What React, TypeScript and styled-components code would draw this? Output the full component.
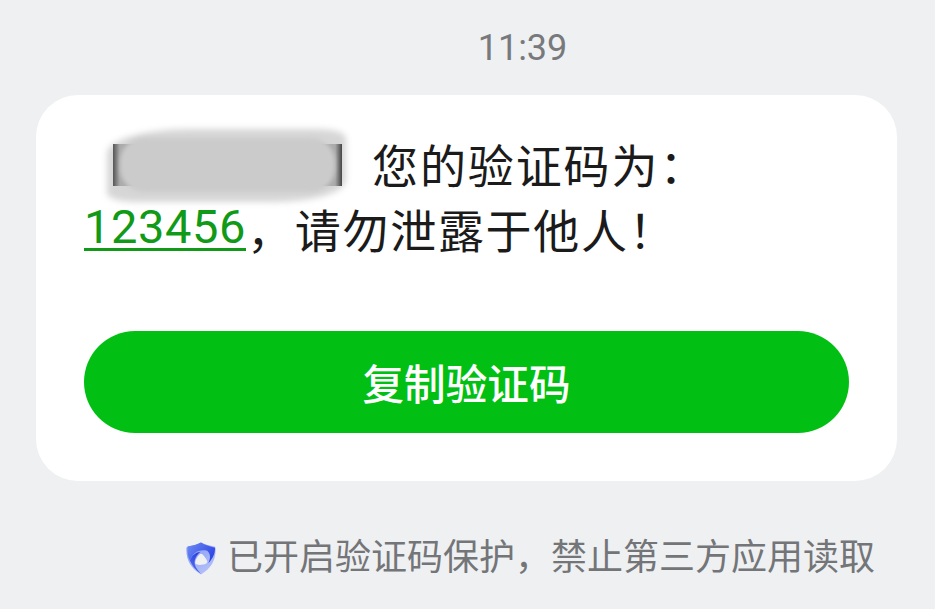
import React from 'react'
import styled, { createGlobalStyle } from 'styled-components'

const CJK = `Roboto, "Noto Sans CJK SC", sans-serif`

const GlobalStyle = createGlobalStyle`
	html, body {
		margin: 0;
		height: 100%;
		background: #eff0f2;
		font-family: ${CJK};
	}
`

function ShieldIcon() {
	return (
		<svg width="30" height="33" viewBox="0 0 31 34">
			<defs>
				<linearGradient id="shield" x1="0" y1="0" x2="0.6" y2="1">
					<stop offset="0" stopColor="#7f97f5" />
					<stop offset="1" stopColor="#b4c0f9" />
				</linearGradient>
				<linearGradient id="bladeTop" x1="0" y1="0" x2="1" y2="0.6">
					<stop offset="0" stopColor="#6f8cf5" />
					<stop offset="1" stopColor="#2d44e2" />
				</linearGradient>
				<linearGradient id="bladeLeft" x1="0" y1="1" x2="0.6" y2="0">
					<stop offset="0" stopColor="#5d78f0" />
					<stop offset="1" stopColor="#2a3fe0" />
				</linearGradient>
			</defs>
			<path
				d="M15.5 0.5 C19 2.5 25 4 29 4.5 C30.5 4.7 30.6 6 30.6 8 C30.6 20 25 28 15.5 33.5 C6 28 0.4 20 0.4 8 C0.4 6 0.5 4.7 2 4.5 C6 4 12 2.5 15.5 0.5 Z"
				fill="url(#shield)"
			/>
			<path d="M15.5 0.5 C12 2.5 7 4 2 4.5 C1 10 2 15 4 19 C7 11 13 7 22 9 C25 12 26 16 23 22 C28 17 30 12 30 6 C25 4.5 19 3 15.5 0.5 Z" fill="url(#bladeTop)" />
			<path d="M4 19 C6 24 10 29 15.5 33 C12 28 8 25 9 19 C10 15 12 12 15 10 C9 11 6 14 4 19 Z" fill="url(#bladeLeft)" />
			<path d="M15.5 12 C17.5 12 22.5 19 22 21 C21 24 10.5 24.5 9.5 22 C8.8 19.5 13 12 15.5 12 Z" fill="#eff0f2" />
		</svg>
	)
}

export default function App() {
	return (
		<Page>
			<GlobalStyle />
			<Time>11:39</Time>
			<Card>
				<Message>
					<FirstLine>
						<Redacted>
							<RedactedHaze />
							<RedactedEdges />
							<RedactedSmear />
						</Redacted>
						您的验证码为：
					</FirstLine>
					<SecondLine>
						<Code>123456</Code>
						<Rest>，请勿泄露于他人！</Rest>
					</SecondLine>
				</Message>
				<CopyButton>复制验证码</CopyButton>
			</Card>
			<Notice>
				<ShieldIcon />
				<NoticeText>已开启验证码保护，禁止第三方应用读取</NoticeText>
			</Notice>
		</Page>
	)
}

const Page = styled.div`
	width: 935px;
	height: 609px;
	overflow: hidden;
	padding: 28px 38px 0 36px;
	box-sizing: border-box;
	display: flex;
	flex-direction: column;
`

const Time = styled.div`
	height: 41px;
	line-height: 41px;
	font-size: 36px;
	color: #77797c;
	text-align: center;
	padding-left: 112px;
`

const Card = styled.div`
	margin-top: 26px;
	height: 386px;
	box-sizing: border-box;
	padding: 35px 48px 48px;
	background: #fff;
	border-radius: 42px;
	display: flex;
	flex-direction: column;
	justify-content: space-between;
`

const Message = styled.div`
	font-size: 46px;
	color: #1b1b1b;
`

const FirstLine = styled.div`
	display: flex;
	align-items: center;
	height: 66px;
	padding-left: 29px;
	letter-spacing: 1.9px;
`

const Redacted = styled.div`
	position: relative;
	width: 229px;
	height: 42px;
	margin-right: 30px;
	top: 2px;
`

const RedactedHaze = styled.div`
	position: absolute;
	left: -6px;
	right: -4px;
	top: -15px;
	bottom: -16px;
	background: #d6d6d6;
	border-radius: 34% 12% 30% 12%;
	filter: blur(3px);
`

const RedactedEdges = styled.div`
	position: absolute;
	inset: 0;
	background: linear-gradient(90deg, #555 0%, #aaa 3%, #ccc 50%, #aaa 97%, #444 100%);
`

const RedactedSmear = styled.div`
	position: absolute;
	left: 7px;
	right: 7px;
	top: -6px;
	bottom: -6px;
	background: #cbcbcb;
	border-radius: 24px;
	filter: blur(2px);
`

const SecondLine = styled.div`
	display: flex;
	align-items: center;
	height: 64px;
`

const Code = styled.span`
	font-size: 47px;
	color: #109a18;
	border-bottom: 3px solid #109a18;
	line-height: 43px;
	letter-spacing: 0.6px;
`

const Rest = styled.span`
	letter-spacing: 1.7px;
	margin-left: 1px;
`

const CopyButton = styled.button`
	height: 102px;
	border: 0;
	border-radius: 51px;
	background: #02c013;
	color: #fff;
	font-family: ${CJK};
	font-size: 41.6px;
	font-weight: 500;
`

const Notice = styled.div`
	margin-top: 57px;
	padding-right: 22px;
	display: flex;
	justify-content: flex-end;
	align-items: center;
	gap: 11px;
`

const NoticeText = styled.span`
	font-size: 36px;
	line-height: 40px;
	color: #737578;
`
